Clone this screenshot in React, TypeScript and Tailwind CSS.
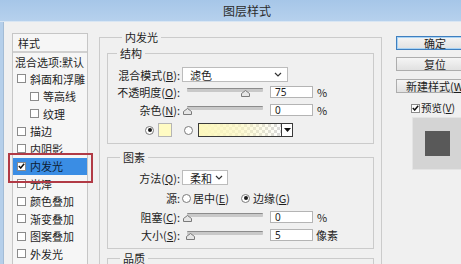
import React from "react";

function Check({ checked }: { checked?: boolean }) {
  return (
    <span className="flex h-[9px] w-[9px] shrink-0 items-center justify-center border border-[#8b8b8b] bg-white">
      {checked && (
        <svg width="7" height="6" viewBox="0 0 7 6">
          <path d="M0.8 3 L2.7 5 L6.2 0.8" fill="none" stroke="#111" strokeWidth="1.5" />
        </svg>
      )}
    </span>
  );
}

function Radio({ on }: { on?: boolean }) {
  return (
    <span className="flex h-[9px] w-[9px] shrink-0 items-center justify-center rounded-full border border-[#7b7b7b] bg-white">
      {on && <span className="h-[4px] w-[4px] rounded-full bg-[#1a1a1a]" />}
    </span>
  );
}

function Chevron() {
  return (
    <svg width="8" height="5" viewBox="0 0 8 5" className="shrink-0">
      <path d="M1 1 L4 4 L7 1" fill="none" stroke="#333" strokeWidth="1.2" />
    </svg>
  );
}

function Item({
  label,
  indent,
  selected,
  checked,
}: {
  label: string;
  indent?: boolean;
  selected?: boolean;
  checked?: boolean;
}) {
  return (
    <div
      className={
        "flex h-[17.5px] items-center gap-[4px] " +
        (indent ? "pl-[17px] " : "pl-[4px] ") +
        (selected ? "bg-[#3a8de4] text-[#0d1c33]" : "")
      }
    >
      <Check checked={checked} />
      <span className="whitespace-nowrap">{label}</span>
    </div>
  );
}

function Slider({ thumb }: { thumb: string }) {
  return (
    <div className="relative ml-[7px] h-[12px] w-[76px] shrink-0">
      <div className="mt-[2px] h-[4px] rounded-[1px] border-t border-[#8c8c8c] bg-[#c9c9c9]" />
      <svg width="9" height="7" viewBox="0 0 9 7" className={"absolute top-[4px] " + thumb}>
        <path d="M0.5 6.5 V3.5 L4.5 0.5 L8.5 3.5 V6.5 Z" fill="#e6e6e6" stroke="#7a7a7a" />
      </svg>
    </div>
  );
}

function Num({ value }: { value: string }) {
  return (
    <div className="ml-[7px] flex h-[12px] w-[43px] shrink-0 items-center border border-[#b4b4b4] bg-white pl-[4px] font-['Noto_Sans','Liberation_Sans',sans-serif] text-[10px]">
      {value}
    </div>
  );
}

function Label({ children }: { children: React.ReactNode }) {
  return <div className="w-[72px] shrink-0 whitespace-nowrap text-right">{children}</div>;
}

function Key({ k }: { k: string }) {
  return <span className="underline underline-offset-1">{k}</span>;
}

function Btn({
  children,
  primary,
  className,
}: {
  children: React.ReactNode;
  primary?: boolean;
  className?: string;
}) {
  return (
    <div
      className={
        "flex h-[14px] items-center whitespace-nowrap border bg-linear-to-b from-[#f5f5f5] to-[#e1e1e1] " +
        (primary ? "border-[#3f7fbf] shadow-[inset_0_0_0_1px_#a9d3f4] " : "border-[#adadad] ") +
        (className ?? "")
      }
    >
      {children}
    </div>
  );
}

export default function App() {
  return (
    <div className="relative h-[264px] w-[461px] overflow-hidden bg-[#f0f0f0] font-['Noto_Sans_CJK_SC','Noto_Sans',sans-serif] text-[11px] leading-[12px] text-[#1e1e1e]">
      <div className="flex h-[22px] items-center justify-center border-b border-[#d9e6f3] bg-linear-to-b from-[#a6c6e8] to-[#b6d1ed] pl-[33px] text-[12px] text-[#2b2b2b]">
        图层样式
      </div>

      <div className="flex h-[242px]">
        <div className="w-[4px] shrink-0 border-r border-[#a3bcd6] bg-[#b5cfea]" />

        {/* style list */}
        <div className="ml-[8px] mt-[11px] h-[260px] w-[76px] shrink-0 self-start border border-[#c6c6c6] bg-[#f6f6f6]">
          <div className="flex h-[19px] items-center border-b-2 border-[#d0d0d0] pl-[5px]">样式</div>
          <div className="flex h-[17px] items-center whitespace-nowrap pl-[2px]">混合选项:默认</div>
          <Item label="斜面和浮雕" />
          <Item label="等高线" indent />
          <Item label="纹理" indent />
          <Item label="描边" />
          <Item label="内阴影" />
          <Item label="内发光" selected checked />
          <Item label="光泽" />
          <Item label="颜色叠加" />
          <Item label="渐变叠加" />
          <Item label="图案叠加" />
          <Item label="外发光" />
        </div>

        {/* settings */}
        <div className="ml-[11px] mt-[9px] w-[283px] shrink-0 self-start">
          <fieldset className="h-[300px] border border-[#cbcbcb] px-[7px]">
            <legend className="ml-[15px] px-[3px]">内发光</legend>

            <fieldset className="mt-[4px] border border-[#cbcbcb] pb-[6px] pt-[8px]">
              <legend className="ml-[9px] px-[3px]">结构</legend>
              <div className="flex h-[15px] items-center">
                <Label>
                  混合模式(<Key k="B" />):
                </Label>
                <div className="ml-[2px] flex h-[15px] w-[106px] items-center justify-between border border-[#bcbcbc] bg-white pl-[7px] pr-[5px]">
                  <span>滤色</span>
                  <Chevron />
                </div>
              </div>
              <div className="mt-[4px] flex h-[12px] items-center">
                <Label>
                  不透明度(<Key k="O" />):
                </Label>
                <Slider thumb="left-[54px]" />
                <Num value="75" />
                <span className="ml-[4px]">%</span>
              </div>
              <div className="mt-[6px] flex h-[12px] items-center">
                <Label>
                  杂色(<Key k="N" />):
                </Label>
                <Slider thumb="left-[-4px]" />
                <Num value="0" />
                <span className="ml-[4px]">%</span>
              </div>
              <div className="mt-[7px] flex h-[14px] items-center pl-[37px]">
                <Radio on />
                <div className="ml-[4px] h-[14px] w-[14px] shrink-0 border border-[#b5b5b5] bg-[#fffbc3]" />
                <span className="ml-[12px]">
                  <Radio />
                </span>
                <div className="ml-[5px] flex h-[14px] w-[95px] shrink-0 border border-[#3a3a3a]">
                  <div className="flex-1 bg-[image:repeating-conic-gradient(#dadada_0%_25%,#ffffff_0%_50%)] bg-[length:6px_6px]">
                    <div className="h-full w-full bg-linear-to-r from-[#fdf8bd] via-[#fdf8bd]/70 to-transparent" />
                  </div>
                  <div className="flex w-[11px] items-center justify-center border-l border-[#3a3a3a] bg-white">
                    <svg width="7" height="4" viewBox="0 0 7 4">
                      <path d="M0 0 H7 L3.5 4 Z" fill="#111" />
                    </svg>
                  </div>
                </div>
              </div>
            </fieldset>

            <fieldset className="mt-[7px] border border-[#cbcbcb] pb-[7px] pt-[7px]">
              <legend className="ml-[12px] px-[3px]">图素</legend>
              <div className="flex h-[15px] items-center">
                <Label>
                  方法(<Key k="Q" />):
                </Label>
                <div className="ml-[2px] flex h-[15px] w-[46px] items-center justify-between border border-[#bcbcbc] bg-white pl-[7px] pr-[4px]">
                  <span>柔和</span>
                  <Chevron />
                </div>
              </div>
              <div className="mt-[6px] flex h-[14px] items-center">
                <Label>源:</Label>
                <span className="ml-[2px]">
                  <Radio />
                </span>
                <span className="ml-[2px] w-[48px] shrink-0 whitespace-nowrap">
                  居中(<Key k="E" />)
                </span>
                <Radio on />
                <span className="ml-[3px] whitespace-nowrap">
                  边缘(<Key k="G" />)
                </span>
              </div>
              <div className="mt-[6px] flex h-[12px] items-center">
                <Label>
                  阻塞(<Key k="C" />):
                </Label>
                <Slider thumb="left-[-4px]" />
                <Num value="0" />
                <span className="ml-[4px]">%</span>
              </div>
              <div className="mt-[6px] flex h-[12px] items-center">
                <Label>
                  大小(<Key k="S" />):
                </Label>
                <Slider thumb="left-[-1px]" />
                <Num value="5" />
                <span className="ml-[3px]">像素</span>
              </div>
            </fieldset>

            <fieldset className="mt-[3px] h-[40px] border border-[#cbcbcb]">
              <legend className="ml-[12px] px-[3px]">品质</legend>
            </fieldset>
          </fieldset>
        </div>

        {/* buttons */}
        <div className="ml-[14px] mt-[14px] flex w-[78px] shrink-0 flex-col">
          <Btn primary className="justify-center">
            确定
          </Btn>
          <Btn className="mt-[7px] justify-center">复位</Btn>
          <Btn className="mt-[8px] pl-[9px]">
            新建样式(<Key k="W" />)...
          </Btn>
          <div className="ml-[15px] mt-[10px] flex h-[10px] items-center gap-[1px] whitespace-nowrap text-[10.5px]">
            <Check checked />
            <span>
              预览(<Key k="V" />)
            </span>
          </div>
          <div className="ml-[16px] mt-[4px] flex h-[53px] w-[50px] items-center justify-center border border-[#e4e4e4] bg-[#d4d4d4]">
            <div className="h-[25px] w-[25px] bg-[#595959]" />
          </div>
        </div>
      </div>

      <div className="absolute left-[8px] top-[153px] h-[30px] w-[85px] border-2 border-[#b13a45]" />
    </div>
  );
}
